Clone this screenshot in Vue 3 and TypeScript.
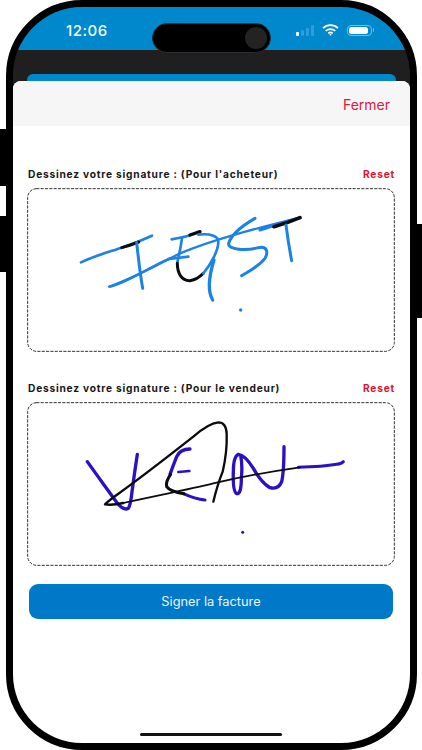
<script setup lang="ts">
interface Stroke { d: string; color: string; width: number }

const blue = '#1b82e6'
const violet = '#2a10c6'
const ink = '#0b0b0f'

const buyerStrokes: Stroke[] = [
  { d: 'M33 172 C80 150 120 140 155 128 C190 116 220 104 246 92', color: blue, width: 8 },
  { d: 'M155 128 Q180 121 206 111', color: ink, width: 9 },
  { d: 'M200 113 C204 150 210 205 218 250', color: blue, width: 9 },
  { d: 'M118 245 C190 220 250 185 330 145 C440 100 560 70 690 38', color: blue, width: 7 },
  { d: 'M118 245 C160 240 230 190 300 160', color: blue, width: 7 },
  { d: 'M305 103 Q340 97 362 90', color: blue, width: 8 },
  { d: 'M360 90 L390 80', color: ink, width: 10 },
  { d: 'M336 100 Q330 140 322 172', color: blue, width: 8 },
  { d: 'M298 162 L355 155', color: blue, width: 8 },
  { d: 'M322 175 C322 205 335 228 360 227 Q382 224 400 205', color: ink, width: 9 },
  { d: 'M400 205 C425 175 445 135 445 110 C445 92 420 85 385 89', color: blue, width: 8 },
  { d: 'M432 165 C418 210 410 255 428 285', color: blue, width: 10 },
  { d: 'M555 40 C520 60 485 85 476 115 C472 135 530 138 565 128 C590 122 596 140 585 160 C565 185 540 198 515 212', color: blue, width: 9 },
  { d: 'M570 75 Q630 55 690 38', color: blue, width: 9 },
  { d: 'M612 65 Q650 55 690 38', color: ink, width: 11 },
  { d: 'M648 60 Q655 115 665 167', color: blue, width: 9 },
  { d: 'M512 315 h.1', color: blue, width: 10 },
]

const sellerStrokes: Stroke[] = [
  { d: 'M22 140 C50 180 80 220 110 262 Q130 288 145 280 Q152 270 156 230 Q164 170 172 118', color: violet, width: 10 },
  { d: 'M612 95 Q612 170 605 200 Q595 225 570 218 Q545 205 520 160 Q495 120 475 118 Q460 125 460 170 Q458 230 470 236 Q484 238 484 190 Q488 150 482 122', color: violet, width: 10 },
  { d: 'M330 102 Q300 102 290 125 Q280 150 270 178', color: violet, width: 10 },
  { d: 'M295 171 L328 168', color: violet, width: 8 },
  { d: 'M310 236 Q345 252 375 255', color: violet, width: 9 },
  { d: 'M655 157 Q730 155 770 148 Q785 146 790 140', color: violet, width: 9 },
  { d: 'M400 260 Q412 210 428 170 Q442 110 440 55 Q438 22 415 22 Q385 25 340 65 C270 120 180 190 110 240 Q85 258 75 268 Q95 272 130 264', color: ink, width: 7 },
  { d: 'M130 264 C240 240 340 220 400 205 Q530 175 660 157', color: ink, width: 5 },
  { d: 'M272 178 Q256 200 260 215 Q270 230 312 236', color: ink, width: 9 },
  { d: 'M488 352 h.1', color: violet, width: 9 },
]

const PAD_W = 1104
const PAD_H = 492

const sections = [
  { label: "Dessinez votre signature : (Pour l'acheteur)", ox: -129, oy: -51, strokes: buyerStrokes },
  { label: 'Dessinez votre signature : (Pour le vendeur)', ox: -159, oy: -39, strokes: sellerStrokes },
]
</script>

<template>
  <div class="device">
    <span class="side side-a"></span>
    <span class="side side-b"></span>
    <span class="side side-c"></span>

    <div class="phone">
      <div class="island"><span class="camera"></span></div>

      <header class="status">
        <span class="time">12:06</span>
        <div class="status-icons">
          <div class="signal">
            <i class="bar bar-1"></i><i class="bar bar-2"></i><i class="bar bar-3"></i><i class="bar bar-4"></i>
          </div>
          <svg class="wifi" viewBox="0 0 17 12" fill="none" stroke="#fff" stroke-width="1.7">
            <path d="M1 4.2 C5.2 .2 11.8 .2 16 4.2" />
            <path d="M3.7 6.9 C6.4 4.4 10.6 4.4 13.3 6.9" />
            <path d="M6.3 9.4 C7.6 8.2 9.4 8.2 10.7 9.4" />
            <circle cx="8.5" cy="10.6" r=".9" fill="#fff" stroke="none" />
          </svg>
          <div class="battery"><span class="level"></span></div>
        </div>
      </header>

      <div class="backdrop"><div class="peek"></div></div>

      <main class="sheet">
        <div class="sheet-head"><span class="close">Fermer</span></div>
        <div class="sheet-body">
          <section v-for="s in sections" :key="s.label" class="sig">
            <div class="sig-head">
              <span class="sig-label">{{ s.label }}</span>
              <span class="reset">Reset</span>
            </div>
            <div class="pad">
              <svg class="ink" :viewBox="`${s.ox} ${s.oy} ${PAD_W} ${PAD_H}`" fill="none" stroke-linecap="round" stroke-linejoin="round">
                <rect
                  :x="s.ox + 2"
                  :y="s.oy + 2"
                  :width="PAD_W - 4"
                  :height="PAD_H - 4"
                  rx="27"
                  stroke="#333"
                  stroke-width="3"
                  stroke-dasharray="7 6"
                />
                <path
                  v-for="(st, i) in s.strokes"
                  :key="i"
                  :d="st.d"
                  :stroke="st.color"
                  :stroke-width="st.width"
                />
              </svg>
            </div>
          </section>
          <button class="submit" type="button">Signer la facture</button>
        </div>
        <span class="home"></span>
      </main>
    </div>
  </div>
</template>

<style scoped>
.device {
  position: relative;
  width: 422px;
  height: 750px;
  padding: 0 5px 0 6px;
  box-sizing: border-box;
  overflow: hidden;
  background: #fff;
}
.side {
  position: absolute;
  background: #000;
  width: 6px;
  left: 0;
}
.side-a { top: 129px; height: 57px; }
.side-b { top: 216px; height: 56px; }
.side-c { left: auto; right: 0; width: 5px; top: 224px; height: 94px; }

.phone {
  position: relative;
  height: 750px;
  box-sizing: border-box;
  border: 7px solid #000;
  border-radius: 76px;
  overflow: hidden;
  background: #1f1f20;
  display: flex;
  flex-direction: column;
  font-family: Inter, "Liberation Sans", sans-serif;
}
.island {
  position: absolute;
  top: 16px;
  left: 139px;
  width: 119px;
  height: 30px;
  box-sizing: border-box;
  background: #000;
  border: 1px solid #2a2d31;
  border-radius: 15px;
  display: flex;
  align-items: center;
  justify-content: flex-end;
  padding-right: 3px;
}
.camera {
  width: 22px;
  height: 22px;
  border-radius: 50%;
  background: #232323;
}
.status {
  height: 43px;
  flex: none;
  box-sizing: border-box;
  background: #0088cc;
  padding: 3px 38px 0 53px;
  display: flex;
  align-items: center;
  justify-content: space-between;
}
.time {
  font-size: 15px;
  font-weight: 500;
  letter-spacing: .5px;
  color: #f2f8fc;
}
.status-icons {
  display: flex;
  align-items: center;
}
.signal {
  display: flex;
  align-items: flex-end;
  gap: 2px;
  height: 11px;
  margin-right: 8px;
}
.bar {
  width: 3px;
  background: #2a9fdb;
  border-radius: 1px;
}
.bar-1 { height: 4px; background: #fff; }
.bar-2 { height: 6px; }
.bar-3 { height: 8px; }
.bar-4 { height: 11px; }
.wifi {
  width: 17px;
  height: 12px;
  margin-right: 8px;
}
.battery {
  position: relative;
  width: 25px;
  height: 11px;
  box-sizing: border-box;
  border: 1px solid #6fc0e8;
  border-radius: 4px;
  padding: 1px;
  display: flex;
}
.battery::after {
  content: "";
  position: absolute;
  right: -3px;
  top: 2.5px;
  width: 1.5px;
  height: 4px;
  border-radius: 0 1px 1px 0;
  background: #6fc0e8;
}
.level {
  flex: 1;
  margin-right: 2px;
  background: #fff;
  border-radius: 2.5px;
}
.backdrop {
  height: 31px;
  flex: none;
  box-sizing: border-box;
  padding: 24px 14px 0;
  overflow: hidden;
}
.peek {
  height: 20px;
  background: #0088cc;
  border-radius: 6px 6px 0 0;
}
.sheet {
  position: relative;
  flex: 1;
  background: #fff;
  border-radius: 8px 8px 0 0;
  display: flex;
  flex-direction: column;
}
.sheet-head {
  height: 45px;
  flex: none;
  background: #f6f6f6;
  border-radius: 8px 8px 0 0;
  display: flex;
  align-items: center;
  justify-content: flex-end;
  padding: 1px 20px 0 0;
  box-sizing: border-box;
}
.close {
  font-size: 14px;
  color: #e0173d;
}
.sheet-body {
  padding: 41px 15px 0 14px;
  display: flex;
  flex-direction: column;
}
.sig { margin-bottom: 29px; }
.sig:last-of-type { margin-bottom: 18px; }
.sig-head {
  height: 14px;
  display: flex;
  align-items: center;
  justify-content: space-between;
  margin-bottom: 7px;
  font-size: 10.2px;
  font-weight: 700;
  letter-spacing: .78px;
  padding-left: 1px;
}
.sig-label { color: #17181a; }
.reset { color: #e0142e; }
.pad {
  height: 164px;
  display: flex;
}
.ink {
  display: block;
  width: 100%;
  height: 100%;
}
.submit {
  height: 35px;
  margin: 0 2px;
  border: 0;
  border-radius: 9px;
  background: #0079c9;
  color: #eaf5fd;
  font-family: inherit;
  font-size: 12.8px;
  padding: 0;
}
.home {
  position: absolute;
  left: 127px;
  bottom: 7px;
  width: 142px;
  height: 3.5px;
  border-radius: 2px;
  background: #111;
}
</style>

<style>
html, body { margin: 0; background: #fff; }
</style>
